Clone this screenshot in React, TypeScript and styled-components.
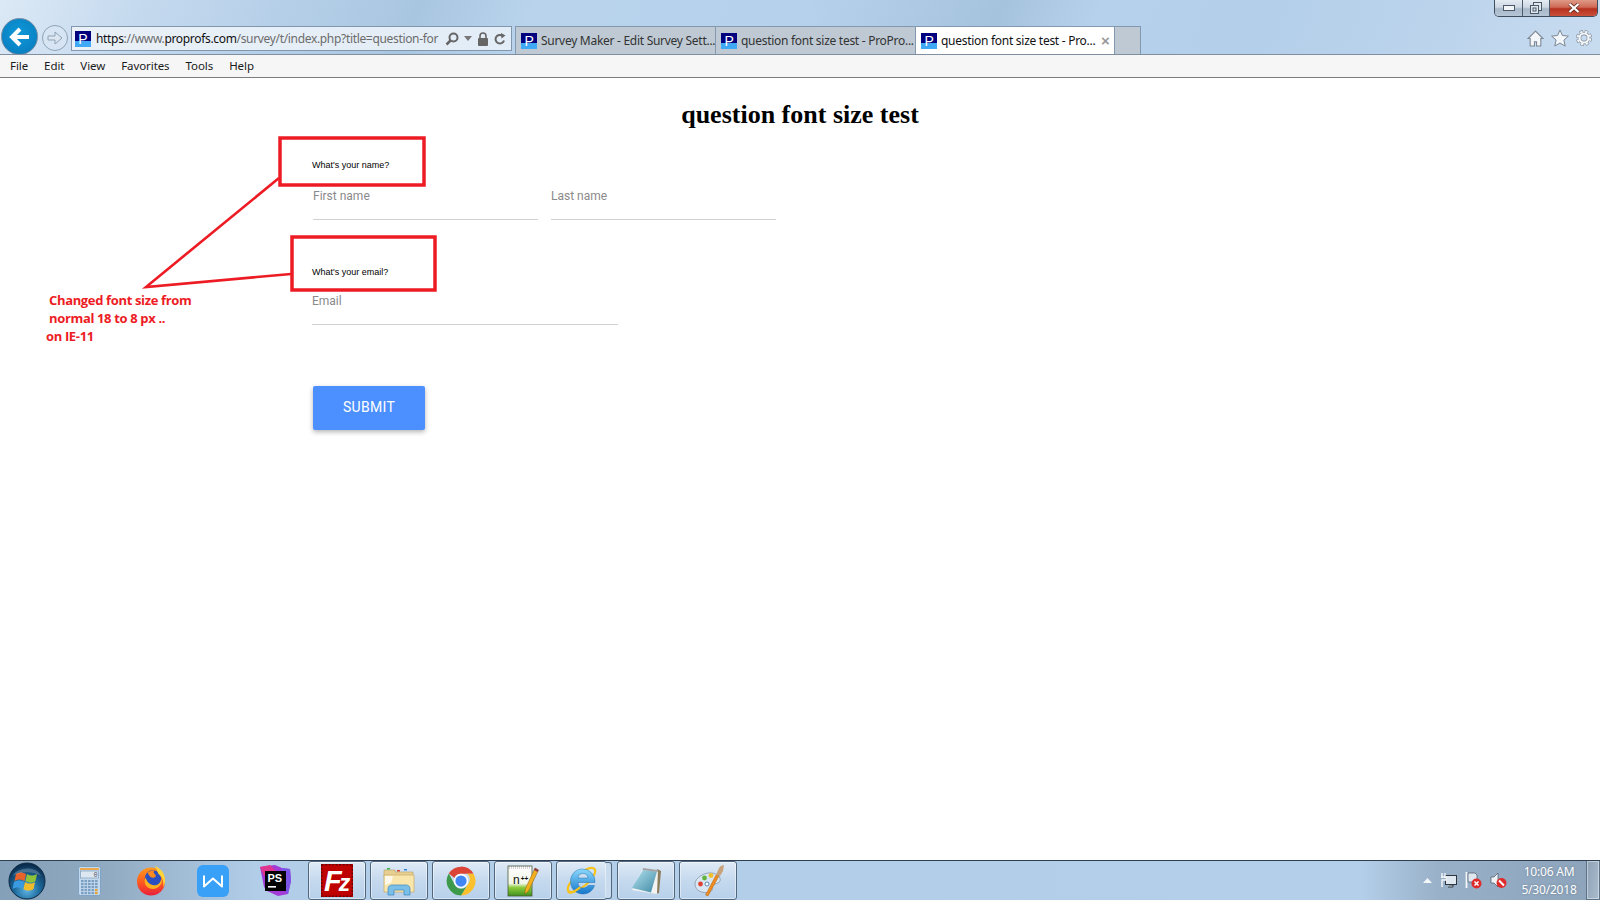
import React from 'react';
import styled, { createGlobalStyle, css } from 'styled-components';

const Global = createGlobalStyle`
  html, body { margin: 0; padding: 0; height: 100%; background: #fff; overflow: hidden; }
  #root { height: 100%; }
  * { box-sizing: border-box; }
`;

const Shell = styled.div`
  height: 900px;
  width: 1600px;
  display: grid;
  grid-template-rows: 55px 23px 1fr 40px;
  overflow: hidden;
  font-family: "Noto Sans", "Liberation Sans", sans-serif;
`;

const Chrome = styled.header`
  display: flex;
  flex-direction: column;
  overflow: hidden;
  border-bottom: 1px solid #7f8f9f;
  background: linear-gradient(112deg, #dce9f6 0%, #c4d9ee 9%, #b7d0e9 17%, #a9c6e0 26%, #b9d3ec 33%, #b6d1ec 50%, #a6c3de 62%, #b6d1ec 68%, #b4cfea 78%, #bcd4ec 90%, #c8dcf0 100%);
`;

const TitleRow = styled.div`
  height: 18px;
  flex: none;
  display: flex;
  justify-content: flex-end;
  padding-right: 2px;
`;

const WindowControls = styled.div`
  display: flex;
  height: 17px;
  border: 1px solid #3f4c5c;
  border-top: 0;
  border-radius: 0 0 5px 5px;
  overflow: hidden;
`;

const WinButton = styled.div<{ $w: number; $close?: boolean }>`
  width: ${p => p.$w}px;
  display: flex;
  align-items: center;
  justify-content: center;
  border-right: 1px solid #4d5c6d;
  background: ${p => p.$close
    ? 'linear-gradient(180deg, #dd9a86 0%, #cf6a56 45%, #b5301f 55%, #c9503c 100%)'
    : 'linear-gradient(180deg, #e4ebf2 0%, #ccd7e3 45%, #a9b9ca 55%, #b5c5d6 100%)'};
  &:last-child { border-right: 0; }
`;

const NavRow = styled.div`
  flex: 1;
  display: flex;
  align-items: flex-end;
  padding-left: 1px;
  position: relative;
`;

const BackButton = styled.div`
  width: 37px;
  height: 37px;
  flex: none;
  margin-bottom: -1px;
  border-radius: 50%;
  background: radial-gradient(circle at 50% 40%, #0e98d8 0%, #0a82c4 70%, #086fa8 100%);
  border: 1px solid #6f8aa3;
  display: flex;
  align-items: center;
  justify-content: center;
`;

const ForwardButton = styled.div`
  width: 26px;
  height: 26px;
  flex: none;
  margin: 0 3px 3px 4px;
  border-radius: 50%;
  border: 1px solid #8ea4ba;
  background: rgba(220, 232, 244, .55);
  display: flex;
  align-items: center;
  justify-content: center;
`;

const AddressBar = styled.div`
  width: 441px;
  height: 25px;
  flex: none;
  margin-bottom: 3px;
  display: flex;
  align-items: center;
  padding: 0 3px;
  border: 1px solid #8197ad;
  background: linear-gradient(90deg, #e9f0f7, #e3edf7);
`;

const Favicon = styled.span`
  width: 16px;
  height: 16px;
  flex: none;
  display: flex;
  align-items: center;
  justify-content: center;
  background: linear-gradient(180deg, #00007f 0 60%, #3fa9f5 60% 100%);
  color: #fff;
  font: 14px/16px "Liberation Sans", sans-serif;
`;

const UrlText = styled.div`
  width: 345px;
  flex: none;
  margin-left: 5px;
  overflow: hidden;
  white-space: nowrap;
  font-size: 12px;
  letter-spacing: -.33px;
  color: #6c6c6c;
  b { font-weight: 400; color: #111; }
`;

const AddressIcons = styled.div`
  display: flex;
  align-items: center;
  margin-left: 4px;
  gap: 5px;
`;

const TabStrip = styled.div`
  display: flex;
  height: 28px;
  flex: none;
  margin-left: 3px;
  align-items: stretch;
`;

const Tab = styled.div<{ $active?: boolean }>`
  width: 200px;
  display: flex;
  align-items: center;
  gap: 4px;
  padding: 0 0 0 5px;
  border: 1px solid #8399af;
  border-left-width: 1px;
  border-right-width: ${p => (p.$active ? '1px' : '0')};
  border-bottom: 0;
  background: ${p => (p.$active ? '#fff' : '#bec9d4')};
  color: ${p => (p.$active ? '#111' : '#333')};
  font-size: 12px;
  letter-spacing: -.28px;
  white-space: nowrap;
`;

const TabTitle = styled.span`
  flex: 1;
`;

const TabClose = styled.span`
  width: 13px;
  flex: none;
  color: #9a9a9a;
  font: bold 15px/15px "Liberation Sans", sans-serif;
`;

const NewTab = styled.div`
  width: 26px;
  background: #bec9d4;
  border: 1px solid #8399af;
  border-left: 0;
  border-bottom: 0;
`;

const RightIcons = styled.div`
  margin-left: auto;
  display: flex;
  align-items: center;
  gap: 7px;
  padding: 0 8px 7px 0;
`;

const MenuBar = styled.nav`
  display: flex;
  align-items: center;
  gap: 16px;
  padding: 0 0 1px 10px;
  background: #f6f6f6;
  border-bottom: 1px solid #7c7c7c;
  font-size: 11.5px;
  letter-spacing: -.08px;
  color: #1a1a1a;
`;

const Page = styled.main`
  position: relative;
  background: #fff;
  overflow: hidden;
`;

const Title = styled.h1`
  margin: 23px 0 0;
  text-align: center;
  font: bold 26px/28px "Liberation Serif", serif;
  color: #000;
`;

const Form = styled.form`
  padding: 29px 0 0 312px;
  display: flex;
  flex-direction: column;
`;

const Question = styled.div<{ $top: number }>`
  margin-top: ${p => p.$top}px;
  font: 9px/14px "Liberation Sans", sans-serif;
  color: #000;
  height: 14px;
`;

const FieldRow = styled.div<{ $top: number }>`
  display: flex;
  gap: 13px;
  margin-top: ${p => p.$top}px;
`;

const Field = styled.div<{ $w: number; $inset?: boolean }>`
  width: ${p => p.$w}px;
  height: 31px;
  ${p => p.$inset && css`margin-left: 1px;`}
  border-bottom: 1px solid #d2d2d2;
  font: 12px/14px Roboto, "Liberation Sans", sans-serif;
  color: #8a8a8a;
`;

const Submit = styled.button`
  width: 112px;
  height: 44px;
  margin: 61px 0 0 1px;
  padding: 0 0 3px;
  border: 0;
  border-radius: 2px;
  background: #4c8ffe;
  color: #fff;
  font: 400 14px/18px Roboto, "Liberation Sans", sans-serif;
  letter-spacing: .3px;
  box-shadow: 0 2px 5px rgba(0, 0, 0, .3);
`;

const Callouts = styled.svg`
  position: absolute;
  inset: 0;
  width: 100%;
  height: 100%;
  pointer-events: none;
`;

const Note = styled.div`
  position: absolute;
  left: 46px;
  top: 214px;
  color: #ed1c24;
  font: bold 13px/17.9px "Open Sans", "Liberation Sans", sans-serif;
  letter-spacing: -.35px;
  white-space: pre;
`;

const Taskbar = styled.footer`
  display: flex;
  align-items: stretch;
  gap: 4px;
  border-top: 1px solid #2e3f52;
  background: linear-gradient(90deg, #84a0b8 0%, #8ea8bf 6%, #b2cde8 16%, #b4cfe9 85%, #98b0c8 90%, #8ca3ba 100%);
`;

const StartSlot = styled.div`
  width: 56px;
  flex: none;
  display: flex;
  align-items: center;
  justify-content: center;
  padding-right: 2px;
`;

const TaskSlot = styled.div<{ $running?: boolean; $w?: number; $stack?: boolean }>`
  position: relative;
  width: ${p => p.$w ?? 58}px;
  flex: none;
  display: flex;
  align-items: center;
  justify-content: center;
  ${p => p.$running && css`
    border: 1px solid #51677d;
    border-radius: 3px;
    background: linear-gradient(180deg, #dfeaf6 0%, #c5d9ee 50%, #b7d0ea 100%);
    box-shadow: inset 0 0 0 1px rgba(255,255,255,.45);
  `}
  ${p => p.$stack && css`
    margin-right: 6px;
    &::after {
      content: "";
      position: absolute;
      top: 0;
      bottom: 0;
      right: -6px;
      width: 5px;
      border: 1px solid #51677d;
      border-left: 0;
      border-radius: 0 3px 3px 0;
      background: #c8dbef;
    }
  `}
`;

const Tray = styled.div`
  margin-left: auto;
  display: flex;
  align-items: center;
`;

const TrayIcons = styled.div`
  display: flex;
  align-items: center;
  gap: 8px;
  margin-right: 6px;
`;

const Clock = styled.div`
  width: 72px;
  margin-right: 1px;
  text-align: center;
  color: #fff;
  font-size: 12px;
  letter-spacing: -.2px;
  line-height: 18px;
  text-shadow: 0 0 2px rgba(60, 80, 100, .5);
`;

const ShowDesktop = styled.div`
  width: 14px;
  align-self: stretch;
  border: 1px solid #5c7288;
  border-top: 0;
  background: linear-gradient(100deg, #8fa3b7, #aabccd);
  box-shadow: inset 0 0 0 1px rgba(255,255,255,.4);
`;

const Ic = styled.svg<{ $w: number; $h?: number }>`
  width: ${p => p.$w}px;
  height: ${p => p.$h ?? p.$w}px;
  flex: none;
  display: block;
`;

const Orb = () => (
  <Ic $w={38} viewBox="0 0 38 38">
    <defs>
      <radialGradient id="orb" cx="50%" cy="75%" r="70%">
        <stop offset="0" stopColor="#5fb6e6" />
        <stop offset=".5" stopColor="#1d6a9c" />
        <stop offset="1" stopColor="#0a2c4e" />
      </radialGradient>
    </defs>
    <circle cx="19" cy="19" r="18" fill="url(#orb)" stroke="#0d2a44" />
    <path d="M8 12c3-2 6-2 10 0l-1.500 7c-3-2-6-2-10 0z" fill="#e8622c" />
    <path d="M19 12c3 2 6 2 10 0l-1.500 7c-3 2-6 2-10 0z" fill="#8fc33a" />
    <path d="M6 20c3-2 7-2 10 0l-1.500 7c-3-2-7-2-10 0z" fill="#3a9be0" />
    <path d="M17 20c3 2 7 2 10 0l-1.500 7c-3 2-7 2-10 0z" fill="#f2bd2a" />
    <path d="M5 14c3-9 24-11 28 0-8-5-20-5-28 0z" fill="#fff" opacity=".22" />
  </Ic>
);

const Calculator = () => (
  <Ic $w={23} $h={30} viewBox="0 0 23 30">
    <rect x=".5" y=".5" width="22" height="29" rx="2" fill="#c3daee" stroke="#7ea3c4" />
    <rect x="2" y="2" width="19" height="2" fill="#eba94f" />
    <rect x="2.500" y="5" width="18" height="7" fill="#dde7f1" stroke="#6f8fb0" strokeWidth=".6" />
    <text x="15.500" y="11" fontFamily="Liberation Mono" fontSize="7" fill="#556">0</text>
    {[14, 17, 20, 23, 26].map(y => [3, 6.5, 10, 13.5, 17].map(x => (
      <rect key={`${x}-${y}`} x={x} y={y} width="2.600" height="2.200" fill={x === 17 && y > 20 ? '#e8a030' : '#7c9fc2'} />
    )))}
  </Ic>
);

const Firefox = () => (
  <Ic $w={31} viewBox="0 0 32 32">
    <defs>
      <linearGradient id="ffa" x1="0" y1="0" x2="0" y2="1">
        <stop offset="0" stopColor="#ff9a1f" />
        <stop offset=".5" stopColor="#ff5e1e" />
        <stop offset="1" stopColor="#e8203a" />
      </linearGradient>
    </defs>
    <circle cx="15.500" cy="17" r="14.500" fill="url(#ffa)" />
    <circle cx="17.500" cy="14" r="8.500" fill="#2a4fc0" />
    <path d="M10 13c1 4 4 8 9 8 4 0 7-3 7-7 1 2 1 5-1 7-3 4-9 5-13 2-3-2-4-7-2-10z" fill="#ffb01f" />
    <path d="M12 8c2-2 5-3 7-2-1 1-1 2 0 3 2 1 2 3 0 4-3 1-5-1-7-5z" fill="#ff8a1f" />
    <path d="M19 1c6 2 11 7 11 15 0 3-1 5-2 7 1-6-1-11-5-14-1-3-2-6-4-8z" fill="#ffd43a" />
  </Ic>
);

const Wps = () => (
  <Ic $w={32} viewBox="0 0 32 32">
    <rect width="32" height="32" rx="6" fill="#39a0f8" />
    <path d="M7 10.500v11l9-8 9 8v-11" fill="none" stroke="#fff" strokeWidth="2" strokeLinejoin="round" />
  </Ic>
);

const PhpStorm = () => (
  <Ic $w={33} viewBox="0 0 33 33">
    <path d="M1 3l15-2 7 3 8 1 1 12-3 13-10 2-11-5-3-4z" fill="#a33bd6" />
    <path d="M1 3l10-2 6 6-12 5z" fill="#e0358f" />
    <path d="M22 4l9 1 1 12-3 13-6-6z" fill="#7c55e8" />
    <rect x="6" y="7" width="21" height="20" fill="#000" />
    <rect x="9" y="22" width="8" height="1.600" fill="#fff" />
    <text x="8.500" y="18" fontFamily="Liberation Sans" fontWeight="700" fontSize="11" fill="#fff">PS</text>
  </Ic>
);

const FileZilla = () => (
  <Ic $w={32} $h={33} viewBox="0 0 32 33">
    <rect width="32" height="33" fill="#bf0000" />
    <rect x=".7" y=".7" width="30.600" height="31.600" fill="none" stroke="#6e0000" strokeWidth="1.400" strokeDasharray="2 1.500" />
    <text x="3" y="27" fontFamily="Liberation Sans" fontStyle="italic" fontWeight="700" fill="#fff">
      <tspan fontSize="29">F</tspan><tspan fontSize="23" dx="-3">z</tspan>
    </text>
  </Ic>
);

const Explorer = () => (
  <Ic $w={32} $h={30} viewBox="0 0 32 30">
    <path d="M1 4h11v2h18v5H1z" fill="#e8d095" stroke="#b9a060" strokeWidth=".6" />
    <rect x="4" y="2" width="3" height="1.500" fill="#36b34a" />
    <rect x="14" y="4" width="3" height="1.500" fill="#d8402a" />
    <rect x="21" y="3" width="3" height="1.500" fill="#2e88d8" />
    <path d="M1 9h30v17H1z" fill="#f8e6ad" stroke="#c8ab66" strokeWidth=".7" />
    <path d="M2 10l8 0-2 7-6 2z" fill="#fff" opacity=".75" />
    <path d="M5 29V23c0-3 2-4 4-4h14c2 0 4 1 4 4v6h-6v-5H11v5z" fill="#79bfe8" stroke="#3b86bf" strokeWidth=".7" />
  </Ic>
);

const ChromeLogo = () => (
  <Ic $w={30} viewBox="0 0 48 48">
    <path d="M24 1A23 23 0 0 1 44 12.500H24A11.500 11.500 0 0 0 13.500 19L4.500 12A23 23 0 0 1 24 1z" fill="#db4437" />
    <path d="M44 12.500A23 23 0 0 1 24 47l10.500-17a11.500 11.500 0 0 0-.5-17.500z" fill="#fbc02d" />
    <path d="M24 47A23 23 0 0 1 4.500 12L14 30a11.500 11.500 0 0 0 20.500 0z" fill="#3c9a4a" />
    <circle cx="24" cy="24" r="11.500" fill="#fff" />
    <circle cx="24" cy="24" r="9" fill="#4285f4" />
  </Ic>
);

const NotepadPP = () => (
  <Ic $w={32} $h={33} viewBox="0 0 32 33">
    <defs>
      <linearGradient id="npp" x1="0" y1="0" x2="0" y2="1">
        <stop offset="0" stopColor="#fff" />
        <stop offset=".58" stopColor="#f2f6e8" />
        <stop offset=".72" stopColor="#8ccb3a" />
        <stop offset="1" stopColor="#3f8f1e" />
      </linearGradient>
    </defs>
    <rect x="1" y="2" width="24" height="30" fill="url(#npp)" stroke="#4b5b3a" strokeWidth=".8" />
    <path d="M2 4h22M2 2.500h22" stroke="#889" strokeWidth=".7" strokeDasharray="1 1" />
    <text x="6" y="20" fontFamily="Liberation Sans" fontWeight="400" fontSize="12">
      <tspan fill="#111">n</tspan><tspan fill="#111" fontSize="6.500" fontWeight="700" dy="-3" dx="1">++</tspan>
    </text>
    <path d="M28 4l3.500 2-10 21-3.500 3 .3-5z" fill="#f2b01e" stroke="#8a5a10" strokeWidth=".5" />
    <path d="M28 4l3.500 2-1 2-3.500-2z" fill="#8d3a4a" />
  </Ic>
);

const IE = () => (
  <Ic $w={32} viewBox="0 0 32 32">
    <defs>
      <linearGradient id="iee" x1="0" y1="0" x2="0" y2="1">
        <stop offset="0" stopColor="#8bd8fa" />
        <stop offset="1" stopColor="#1577cc" />
      </linearGradient>
    </defs>
    <ellipse cx="15.500" cy="15" rx="17" ry="6.500" transform="rotate(-40 15.500 15)" fill="none" stroke="#f7c21b" strokeWidth="2.200" />
    <path d="M16.500 4A12.500 12.500 0 0 1 29 17.500H12c.2 3.500 2.300 5.500 5 5.500 2.400 0 4-1 5-2.500h6.500C26.800 25.800 22.500 29 17 29 10 29 4.500 24 4.500 16.500S10 4 16.500 4zM12 13h10c-.3-3-2.200-4.500-5-4.500S12.300 10 12 13z" fill="url(#iee)" stroke="#0d5fa8" strokeWidth=".4" />
    <path d="M2.500 26c1.500 2 6-.5 11-4.500l1.500 1.500c-6 5-11 7-13 5-.8-1-.5-2.500.5-4.500z" fill="#f7c21b" />
  </Ic>
);

const Notepad = () => (
  <Ic $w={32} $h={30} viewBox="0 0 32 30">
    <defs>
      <linearGradient id="npd" x1="0" y1="0" x2="1" y2="1">
        <stop offset="0" stopColor="#b5e2ee" />
        <stop offset="1" stopColor="#3f8aa6" />
      </linearGradient>
    </defs>
    <path d="M27 3l4 2-2 22-3 1z" fill="#8a7c5c" />
    <path d="M13 2l15 2-1 24L2 24z" fill="#f3f3f3" />
    <path d="M13 4l14 1.500-6 21L2 22z" fill="url(#npd)" />
    <path d="M13 2l15 2-.2 2L12.500 4z" fill="#9ea3a8" />
  </Ic>
);

const Paint = () => (
  <Ic $w={33} viewBox="0 0 33 33">
    <path d="M3 20c0-6 9-12 17-11 6 1 9 4 8 8-1 3-5 2-7 4-2 2 1 5-3 7-7 2-15-1-15-8z" fill="#d7e6f2" stroke="#7d8c9c" strokeWidth=".7" />
    <circle cx="8.500" cy="20" r="2.400" fill="#e0402f" />
    <circle cx="12.500" cy="14" r="2.400" fill="#62b23e" />
    <circle cx="19" cy="11.500" r="2.400" fill="#eec02c" />
    <circle cx="15" cy="20" r="2" fill="#fff" stroke="#5b87b0" strokeWidth="1" />
    <path d="M27 12L16 32l-2.500-1L24 11z" fill="#ef8a1c" stroke="#a85a10" strokeWidth=".4" />
    <path d="M24 11l3-7c1-2 4-3 5-3l-1 6-3 5z" fill="#c9a27a" />
  </Ic>
);

const P = () => <Favicon>P</Favicon>;

const App = () => (
  <Shell>
    <Global />
    <Chrome>
      <TitleRow>
        <WindowControls>
          <WinButton $w={28}>
            <Ic $w={12} $h={6} viewBox="0 0 12 6"><rect x=".5" y=".5" width="11" height="5" fill="#f2f5f8" stroke="#4a5868" /></Ic>
          </WinButton>
          <WinButton $w={27}>
            <Ic $w={12} viewBox="0 0 12 12"><rect x="3.500" y=".5" width="8" height="8" fill="#dfe6ee" stroke="#4a5868" /><rect x=".5" y="3.500" width="8" height="8" fill="#dfe6ee" stroke="#4a5868" /><rect x="3" y="6" width="3" height="3" fill="none" stroke="#4a5868" /></Ic>
          </WinButton>
          <WinButton $w={47} $close>
            <Ic $w={12} $h={10} viewBox="0 0 12 10"><path d="M1.500 1l9 8M10.500 1l-9 8" stroke="#5b2a22" strokeWidth="3.600" /><path d="M1.500 1l9 8M10.500 1l-9 8" stroke="#fff" strokeWidth="2.200" /></Ic>
          </WinButton>
        </WindowControls>
      </TitleRow>
      <NavRow>
        <BackButton>
          <Ic $w={24} viewBox="0 0 24 24"><path d="M21 12H5M12 4l-8 8 8 8" fill="none" stroke="#fff" strokeWidth="4" /></Ic>
        </BackButton>
        <ForwardButton>
          <Ic $w={18} viewBox="0 0 18 18"><path d="M2 7h7V3l7 6-7 6v-4H2z" fill="#dbe6f0" stroke="#8fa3b6" /></Ic>
        </ForwardButton>
        <AddressBar>
          <P />
          <UrlText><b>https</b>://www.<b>proprofs.com</b>/survey/t/index.php?title=question-for</UrlText>
          <AddressIcons>
            <Ic $w={14} viewBox="0 0 14 14"><circle cx="8.500" cy="5.500" r="4" fill="none" stroke="#666" strokeWidth="2" /><path d="M5.500 8.500L1.500 12.500" stroke="#666" strokeWidth="2.500" /></Ic>
            <Ic $w={8} $h={5} viewBox="0 0 8 5"><path d="M0 0h8L4 5z" fill="#777" /></Ic>
            <Ic $w={12} $h={14} viewBox="0 0 12 14"><path d="M3 6V4a3 3 0 0 1 6 0v2" fill="none" stroke="#666" strokeWidth="1.600" /><rect x="1" y="6" width="10" height="8" rx="1" fill="#666" /></Ic>
            <Ic $w={12} viewBox="0 0 12 12"><path d="M10 7.500A4.300 4.300 0 1 1 8.500 2.800" fill="none" stroke="#666" strokeWidth="2" /><path d="M7 0l4.500 2.500L7.500 5.500z" fill="#666" /></Ic>
          </AddressIcons>
        </AddressBar>
        <TabStrip>
          <Tab><P /><TabTitle>Survey Maker - Edit Survey Sett...</TabTitle></Tab>
          <Tab><P /><TabTitle>question font size test - ProPro...</TabTitle></Tab>
          <Tab $active><P /><TabTitle>question font size test - Pro...</TabTitle><TabClose>×</TabClose></Tab>
          <NewTab />
        </TabStrip>
        <RightIcons>
          <Ic $w={17} viewBox="0 0 16 16"><path d="M8 1L1 8h2v7h4v-4h2v4h4V8h2z" fill="#f4f7fa" stroke="#7d8793" /></Ic>
          <Ic $w={18} viewBox="0 0 18 18"><path d="M9 1l2.400 5.500 6 .6-4.500 4 1.300 6L9 14l-5.200 3 1.300-6L.6 7.100l6-.6z" fill="#f4f7fa" stroke="#7d8793" /></Ic>
          <Ic $w={16} viewBox="0 0 16 16">
            <circle cx="8" cy="8" r="6.400" fill="none" stroke="#7d8793" strokeWidth="3.200" strokeDasharray="3.100 1.930" />
            <circle cx="8" cy="8" r="4.500" fill="none" stroke="#7d8793" strokeWidth="3.400" />
            <circle cx="8" cy="8" r="6.400" fill="none" stroke="#f4f7fa" strokeWidth="2" strokeDasharray="2.300 2.730" strokeDashoffset="-.4" />
            <circle cx="8" cy="8" r="4.500" fill="none" stroke="#f4f7fa" strokeWidth="2.200" />
          </Ic>
        </RightIcons>
      </NavRow>
    </Chrome>
    <MenuBar>
      <span>File</span><span>Edit</span><span>View</span><span>Favorites</span><span>Tools</span><span>Help</span>
    </MenuBar>
    <Page>
      <Title>question font size test</Title>
      <Form>
        <Question $top={0}>What's your name?</Question>
        <FieldRow $top={17}>
          <Field $w={225} $inset>First name</Field>
          <Field $w={225}>Last name</Field>
        </FieldRow>
        <Question $top={45}>What's your email?</Question>
        <FieldRow $top={15}>
          <Field $w={306}>Email</Field>
        </FieldRow>
        <Submit type="button">SUBMIT</Submit>
      </Form>
      <Callouts>
        <rect x="280" y="60" width="144" height="47" fill="none" stroke="#ed1c24" strokeWidth="3.500" />
        <rect x="292" y="159" width="143" height="53" fill="none" stroke="#ed1c24" strokeWidth="3.500" />
        <path d="M279 100L146 209L291 196" fill="none" stroke="#ed1c24" strokeWidth="2.600" />
      </Callouts>
      <Note>{' Changed font size from\n normal 18 to 8 px ..\non IE-11'}</Note>
    </Page>
    <Taskbar>
      <StartSlot><Orb /></StartSlot>
      <TaskSlot><Calculator /></TaskSlot>
      <TaskSlot><Firefox /></TaskSlot>
      <TaskSlot><Wps /></TaskSlot>
      <TaskSlot><PhpStorm /></TaskSlot>
      <TaskSlot $running><FileZilla /></TaskSlot>
      <TaskSlot $running><Explorer /></TaskSlot>
      <TaskSlot $running><ChromeLogo /></TaskSlot>
      <TaskSlot $running><NotepadPP /></TaskSlot>
      <TaskSlot $running $stack $w={51}><IE /></TaskSlot>
      <TaskSlot $running><Notepad /></TaskSlot>
      <TaskSlot $running><Paint /></TaskSlot>
      <Tray>
        <TrayIcons>
          <Ic $w={9} $h={5} viewBox="0 0 9 5"><path d="M0 5L4.500 0 9 5z" fill="#f4f7fa" /></Ic>
          <Ic $w={17} viewBox="0 0 17 17"><rect x="5.500" y="3.500" width="11" height="9" fill="#dfe7ef" stroke="#2d3640" /><path d="M9 13h4v2H8" fill="#dfe7ef" stroke="#2d3640" /><path d="M2 1v5M5 1v5M1 5h5v3H2v7" fill="none" stroke="#f4f7fa" strokeWidth="1.400" /></Ic>
          <Ic $w={17} viewBox="0 0 17 17"><path d="M1.500 0v16" stroke="#f4f7fa" strokeWidth="1.800" /><path d="M3 1h7l2 2v7H3z" fill="#dfe7ef" stroke="#4c5866" strokeWidth=".7" /><circle cx="11.500" cy="11.500" r="5" fill="#e02b2b" /><path d="M9.500 9.500l4 4M13.500 9.500l-4 4" stroke="#fff" strokeWidth="1.500" /></Ic>
          <Ic $w={17} viewBox="0 0 17 17"><path d="M1 5h3l4-4v14l-4-4H1z" fill="#eef2f6" stroke="#4c5866" strokeWidth=".7" /><circle cx="11.500" cy="11" r="5" fill="#e02b2b" /><path d="M8 11h7" stroke="#fff" strokeWidth="2" transform="rotate(45 11.500 11)" /></Ic>
        </TrayIcons>
        <Clock>10:06 AM<br />5/30/2018</Clock>
        <ShowDesktop />
      </Tray>
    </Taskbar>
  </Shell>
);

export default App;
